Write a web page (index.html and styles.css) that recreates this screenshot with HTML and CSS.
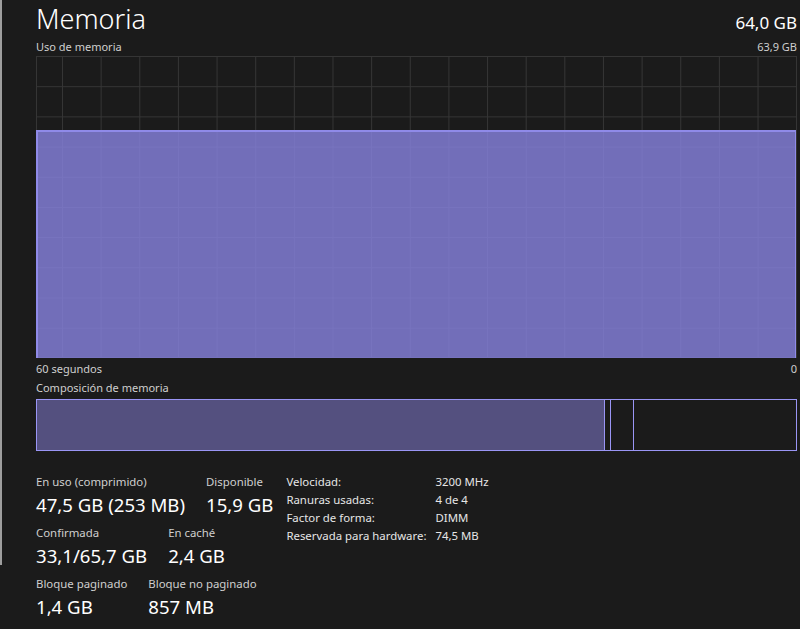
FILE: index.html
```html
<!DOCTYPE html>
<html lang="es">
<head>
  <meta charset="UTF-8" />
  <title>Memoria</title>
  <link rel="stylesheet" href="styles.css">
</head>
<body>
  <div class="strip"></div>

  <div class="main">
    <div class="header">
      <h1>Memoria</h1>
      <span class="total">64,0 GB</span>
    </div>

    <div class="graph-top">
      <span>Uso de memoria</span>
      <span>63,9 GB</span>
    </div>
    <div class="graph">
      <div class="graph-fill" style="height:226px"></div>
    </div>
    <div class="graph-bottom">
      <span>60 segundos</span>
      <span>0</span>
    </div>

    <div class="comp-title">Composición de memoria</div>
    <div class="comp-bar">
      <div class="seg in-use" style="flex-basis:567px"></div>
      <div class="seg" style="flex-basis:5px"></div>
      <div class="seg" style="flex-basis:22px"></div>
      <div class="seg free"></div>
    </div>

    <div class="stats">
      <div class="stat-rows">
        <div class="stat-row">
          <div class="stat">
            <div class="label">En uso (comprimido)</div>
            <div class="value">47,5 GB (253 MB)</div>
          </div>
          <div class="stat">
            <div class="label">Disponible</div>
            <div class="value">15,9 GB</div>
          </div>
        </div>
        <div class="stat-row">
          <div class="stat">
            <div class="label">Confirmada</div>
            <div class="value">33,1/65,7 GB</div>
          </div>
          <div class="stat">
            <div class="label">En caché</div>
            <div class="value">2,4 GB</div>
          </div>
        </div>
        <div class="stat-row">
          <div class="stat">
            <div class="label">Bloque paginado</div>
            <div class="value">1,4 GB</div>
          </div>
          <div class="stat">
            <div class="label">Bloque no paginado</div>
            <div class="value">857 MB</div>
          </div>
        </div>
      </div>

      <table class="details">
        <tr><td>Velocidad:</td><td>3200 MHz</td></tr>
        <tr><td>Ranuras usadas:</td><td>4 de 4</td></tr>
        <tr><td>Factor de forma:</td><td>DIMM</td></tr>
        <tr><td>Reservada para hardware:</td><td>74,5 MB</td></tr>
      </table>
    </div>
  </div>
</body>
</html>
```

FILE: styles.css
```css
body {
  margin: 0;
  background: #1b1b1b;
  color: #fff;
  font-family: 'Noto Sans', sans-serif;
  display: flex;
  align-items: flex-start;
  height: 629px;
  overflow: hidden;
}
.strip {
  width: 2px;
  height: 565px;
  background: #9e9e9e;
}
.main {
  flex: 1;
  padding: 0 3px 0 34px;
}
.header {
  display: flex;
  justify-content: space-between;
  align-items: baseline;
  height: 38px;
}
h1 {
  margin: 0;
  font-size: 27px;
  font-weight: 300;
  line-height: 38px;
}
.total {
  font-size: 17px;
}
.graph-top, .graph-bottom {
  display: flex;
  justify-content: space-between;
  font-size: 11px;
  color: #cfcfcf;
  line-height: 18px;
}
.graph {
  height: 302px;
  box-sizing: border-box;
  border: 1px solid #353535;
  background-image:
    linear-gradient(to right, #353535 1px, transparent 1px),
    linear-gradient(to bottom, #353535 1px, transparent 1px);
  background-size: 38.65px 30.2px;
  background-position: 25px 0, 0 -1px;
  display: flex;
  flex-direction: column;
  justify-content: flex-end;
}
.graph-fill {
  background: rgba(139, 133, 230, 0.78);
  border: 1px solid #8f8ae8;
  border-top-width: 2px;
  border-left-width: 2px;
  border-bottom: 0;
  margin: 0 0 -1px -1px;
}
.graph-bottom {
  margin-top: 2px;
}
.comp-title {
  font-size: 11px;
  color: #cfcfcf;
  line-height: 18px;
  margin-top: 1px;
}
.comp-bar {
  display: flex;
  height: 52px;
  box-sizing: border-box;
  border: 1px solid #9a95f5;
  margin-top: 2px;
}
.seg {
  flex-shrink: 0;
  border-right: 1px solid #9a95f5;
}
.seg.in-use {
  background: #54507f;
}
.seg.free {
  flex: 1;
  border-right: 0;
}
.stats {
  display: flex;
  gap: 13px;
  margin-top: 22px;
}
.stat-row {
  display: flex;
  gap: 21px;
  margin-bottom: 6px;
}
.label {
  font-size: 11.4px;
  color: #cfcfcf;
  line-height: 18px;
}
.value {
  font-size: 18.6px;
  line-height: 27px;
}
.details {
  border-collapse: collapse;
  font-size: 11.4px;
  color: #e6e6e6;
  align-self: flex-start;
}
.details td {
  padding: 0;
  height: 18px;
  line-height: 18px;
}
.details td:first-child {
  padding-right: 9px;
}
```
